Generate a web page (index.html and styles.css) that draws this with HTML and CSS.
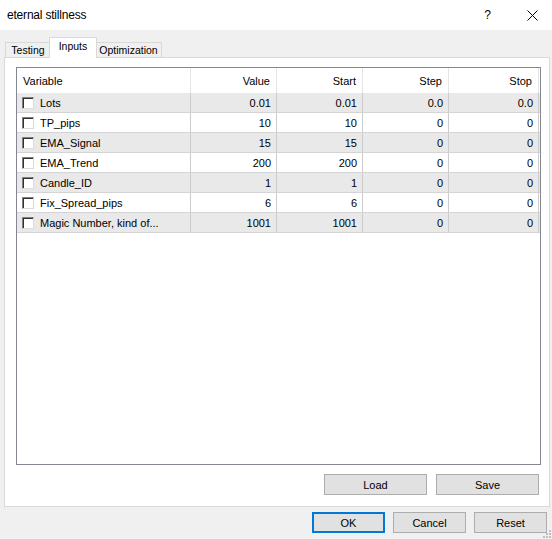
FILE: index.html
```html
<!DOCTYPE html>
<html>
<head>
<meta charset="utf-8">
<link rel="stylesheet" href="styles.css">
</head>
<body>
<div class="dialog">
  <div class="titlebar">
    <span class="title">eternal stillness</span>
    <span class="help">?</span>
    <svg class="close" width="11" height="11" viewBox="0 0 11 11"><path d="M0.5 0.5 L10.5 10.5 M10.5 0.5 L0.5 10.5" stroke="#000" stroke-width="1" fill="none"/></svg>
  </div>
  <div class="tabstrip">
    <div class="tab t-testing">Testing</div>
    <div class="tab active t-inputs">Inputs</div>
    <div class="tab t-opt">Optimization</div>
  </div>
  <div class="panel">
    <div class="listbox">
      <div class="row head">
        <div class="cell left">Variable</div>
        <div class="cell">Value</div>
        <div class="cell">Start</div>
        <div class="cell">Step</div>
        <div class="cell">Stop</div>
      </div>
      <div class="row odd">
        <div class="cell left"><span class="cb"></span>Lots</div>
        <div class="cell">0.01</div><div class="cell">0.01</div><div class="cell">0.0</div><div class="cell">0.0</div>
      </div>
      <div class="row">
        <div class="cell left"><span class="cb"></span>TP_pips</div>
        <div class="cell">10</div><div class="cell">10</div><div class="cell">0</div><div class="cell">0</div>
      </div>
      <div class="row odd">
        <div class="cell left"><span class="cb"></span>EMA_Signal</div>
        <div class="cell">15</div><div class="cell">15</div><div class="cell">0</div><div class="cell">0</div>
      </div>
      <div class="row">
        <div class="cell left"><span class="cb"></span>EMA_Trend</div>
        <div class="cell">200</div><div class="cell">200</div><div class="cell">0</div><div class="cell">0</div>
      </div>
      <div class="row odd">
        <div class="cell left"><span class="cb"></span>Candle_ID</div>
        <div class="cell">1</div><div class="cell">1</div><div class="cell">0</div><div class="cell">0</div>
      </div>
      <div class="row">
        <div class="cell left"><span class="cb"></span>Fix_Spread_pips</div>
        <div class="cell">6</div><div class="cell">6</div><div class="cell">0</div><div class="cell">0</div>
      </div>
      <div class="row odd">
        <div class="cell left"><span class="cb"></span>Magic Number, kind of...</div>
        <div class="cell">1001</div><div class="cell">1001</div><div class="cell">0</div><div class="cell">0</div>
      </div>
    </div>
    <div class="panel-buttons">
      <button class="btn wide">Load</button>
      <button class="btn wide">Save</button>
    </div>
  </div>
  <div class="footer">
    <button class="btn small default">OK</button>
    <button class="btn small">Cancel</button>
    <button class="btn small">Reset</button>
  </div>
  <svg class="grip" width="8" height="8" viewBox="0 0 8 8">
    <rect x="6" y="0" width="2" height="2" fill="#bfbfbf"/>
    <rect x="3" y="3" width="2" height="2" fill="#bfbfbf"/>
    <rect x="6" y="3" width="2" height="2" fill="#bfbfbf"/>
    <rect x="0" y="6" width="2" height="2" fill="#bfbfbf"/>
    <rect x="3" y="6" width="2" height="2" fill="#bfbfbf"/>
    <rect x="6" y="6" width="2" height="2" fill="#bfbfbf"/>
  </svg>
</div>
</body>
</html>
```
FILE: styles.css
```css
* { box-sizing: border-box; }
html, body { margin: 0; padding: 0; }
body {
  background: #f0f0f0;
  font-family: "Liberation Sans", Arial, sans-serif;
  font-size: 11px;
  color: #000;
}
.dialog {
  position: relative;
  width: 552px;
  height: 539px;
  overflow: hidden;
  background: #f0f0f0;
}
.titlebar {
  height: 30px;
  background: #fff;
  display: flex;
  align-items: center;
  padding-left: 7px;
  font-size: 12px;
}
.title { flex: 1; letter-spacing: -0.2px; }
.help { font-size: 12px; margin-right: 36px; }
.close { margin-right: 14px; display: block; }

.tabstrip {
  height: 27px;
  display: flex;
  align-items: flex-end;
  padding-left: 5px;
  position: relative;
  z-index: 2;
}
.tab {
  height: 15px;
  border: 1px solid #d9d9d9;
  border-bottom: none;
  background: #f0f0f0;
  text-align: center;
  font-size: 10.5px;
  line-height: 14px;
}
.t-testing { width: 46px; }
.t-opt { width: 67px; margin-left: -2px; }
.tab.active {
  height: 21px;
  width: 48px;
  margin-left: -2px;
  margin-bottom: -1px;
  background: #fff;
  line-height: 17px;
  position: relative;
  z-index: 3;
}
.t-testing, .t-opt { position: relative; z-index: 1; }

.panel {
  margin-left: 4px;
  width: 546px;
  height: 450px;
  border: 1px solid #d9d9d9;
  background: #fff;
  padding: 9px 0 0 11px;
  position: relative;
  z-index: 1;
}
.listbox {
  width: 525px;
  height: 398px;
  border: 1px solid #828790;
  background: #fff;
}
.row {
  display: grid;
  grid-template-columns: 174px 86px 86px 86px 90px;
  height: 20px;
  border-bottom: 1px solid #d4d4d4;
}
.row.odd { background: #e9e9e9; }
.row.head {
  height: 25px;
  border-bottom: none;
  background: #fff;
}
.cell {
  display: flex;
  align-items: center;
  justify-content: flex-end;
  padding-right: 5px;
  border-right: 1px solid #cccccc;
  white-space: nowrap;
  overflow: hidden;
}
.head .cell {
  border-right: 1px solid #e5e5e5;
  padding-right: 6px;
}
.cell.left {
  justify-content: flex-start;
  padding-left: 5px;
}
.head .cell.left { padding-left: 6px; }
.cb {
  width: 12px;
  height: 12px;
  margin-right: 6px;
  background: #fff;
  border-top: 1px solid #808080;
  border-left: 1px solid #808080;
  border-right: 1px solid #dcdcdc;
  border-bottom: 1px solid #dcdcdc;
  box-shadow: inset 1px 1px 0 #303030;
  flex: none;
}

.panel-buttons {
  width: 525px;
  display: flex;
  justify-content: flex-end;
  gap: 9px;
  margin-top: 9px;
  padding-right: 2px;
}
.btn {
  font-family: "Liberation Sans", Arial, sans-serif;
  font-size: 11px;
  color: #000;
  background: #e1e1e1;
  border: 1px solid #adadad;
  height: 21px;
  padding: 0;
  margin: 0;
}
.btn.wide { width: 103px; }
.btn.small { width: 73px; }
.btn.default { border: 2px solid #0078d7; }
.footer {
  display: flex;
  justify-content: flex-end;
  gap: 8px;
  margin-top: 5px;
  padding-right: 5px;
}
.grip {
  position: absolute;
  right: 1px;
  bottom: 1px;
}
```
